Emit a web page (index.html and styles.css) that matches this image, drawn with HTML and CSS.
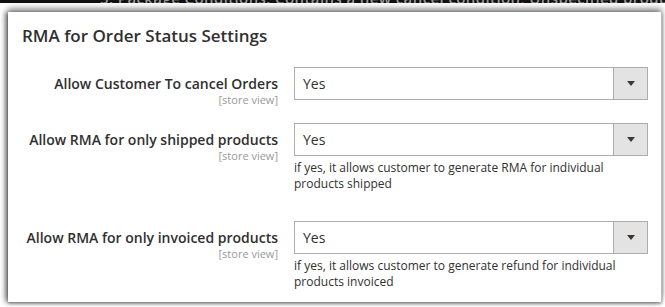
FILE: index.html
```html
<!DOCTYPE html>
<html lang="en">
<head>
    <meta charset="UTF-8">
    <title>RMA for Order Status Settings</title>
    <link rel="stylesheet" href="styles.css">
</head>
<body>
    <!-- cut-off line of the page above -->
    <div class="top-strip">
        <span>5. Package Conditions: Contains a new cancel condition, Unspecified product conditions</span>
    </div>

    <div class="panel">
        <h2 class="panel-title">RMA for Order Status Settings</h2>

        <div class="field">
            <div class="field-label">
                <span class="label-text">Allow Customer To cancel Orders</span>
                <span class="scope">[store view]</span>
            </div>
            <div class="field-control">
                <div class="select">
                    <span class="select-value">Yes</span>
                    <span class="select-btn"><i class="caret"></i></span>
                </div>
            </div>
        </div>

        <div class="field">
            <div class="field-label">
                <span class="label-text">Allow RMA for only shipped products</span>
                <span class="scope">[store view]</span>
            </div>
            <div class="field-control">
                <div class="select">
                    <span class="select-value">Yes</span>
                    <span class="select-btn"><i class="caret"></i></span>
                </div>
                <p class="note">if yes, it allows customer to generate RMA for individual products shipped</p>
            </div>
        </div>

        <div class="field">
            <div class="field-label">
                <span class="label-text">Allow RMA for only invoiced products</span>
                <span class="scope">[store view]</span>
            </div>
            <div class="field-control">
                <div class="select">
                    <span class="select-value">Yes</span>
                    <span class="select-btn"><i class="caret"></i></span>
                </div>
                <p class="note">if yes, it allows customer to generate refund for individual products invoiced</p>
            </div>
        </div>
    </div>
</body>
</html>
```

FILE: styles.css
```css
body {
    margin: 0;
    background: #fff;
    font-family: 'Open Sans', 'Noto Sans', sans-serif;
    color: #303030;
}

/* 顶部截断的文字条 */
.top-strip {
    height: 3px;
    background: #111;
    overflow: hidden;
    display: flex;
    align-items: flex-end;
    padding-left: 100px;
}

    .top-strip span {
        color: #999;
        font-size: 15px;
        font-weight: 600;
        line-height: 10px;
        white-space: nowrap;
        letter-spacing: 0.4px;
    }

/* 设置面板 */
.panel {
    margin: 9px 3px 5px 8px;
    height: 290px;
    box-sizing: border-box;
    background: #fff;
    border-right: 1px solid #bbb;
    box-shadow: -3px 0 5px rgba(0, 0, 0, 0.45), 0 -4px 6px rgba(0, 0, 0, 0.35), 0 2px 3px rgba(0, 0, 0, 0.35);
    padding: 12px 0 0 14px;
}

.panel-title {
    margin: 0 0 19px;
    font-size: 17px;
    font-weight: 600;
    line-height: 24px;
    color: #303030;
}

.field {
    display: grid;
    grid-template-columns: 256px 354px;
    column-gap: 16px;
    margin-bottom: 16px;
}

.field-label {
    display: flex;
    flex-direction: column;
    align-items: flex-end;
    text-align: right;
    padding-top: 8px;
}

.label-text {
    font-size: 14px;
    font-weight: 600;
    line-height: 18px;
    color: #303030;
    white-space: nowrap;
}

.scope {
    font-size: 11px;
    line-height: 14px;
    color: #999;
}

.select {
    display: flex;
    height: 33px;
    box-sizing: border-box;
    border: 1px solid #adadad;
    background: #fff;
}

.select-value {
    flex: 1;
    padding-left: 8px;
    font-size: 14px;
    line-height: 31px;
    color: #303030;
}

.select-btn {
    width: 33px;
    border-left: 1px solid #adadad;
    background: #e3e3e3;
    display: flex;
    align-items: center;
    justify-content: center;
}

.caret {
    width: 0;
    height: 0;
    border-left: 4px solid transparent;
    border-right: 4px solid transparent;
    border-top: 5px solid #41362f;
}

.note {
    margin: 4px 20px 13px 0;
    font-size: 12px;
    line-height: 16px;
    color: #303030;
}
```
